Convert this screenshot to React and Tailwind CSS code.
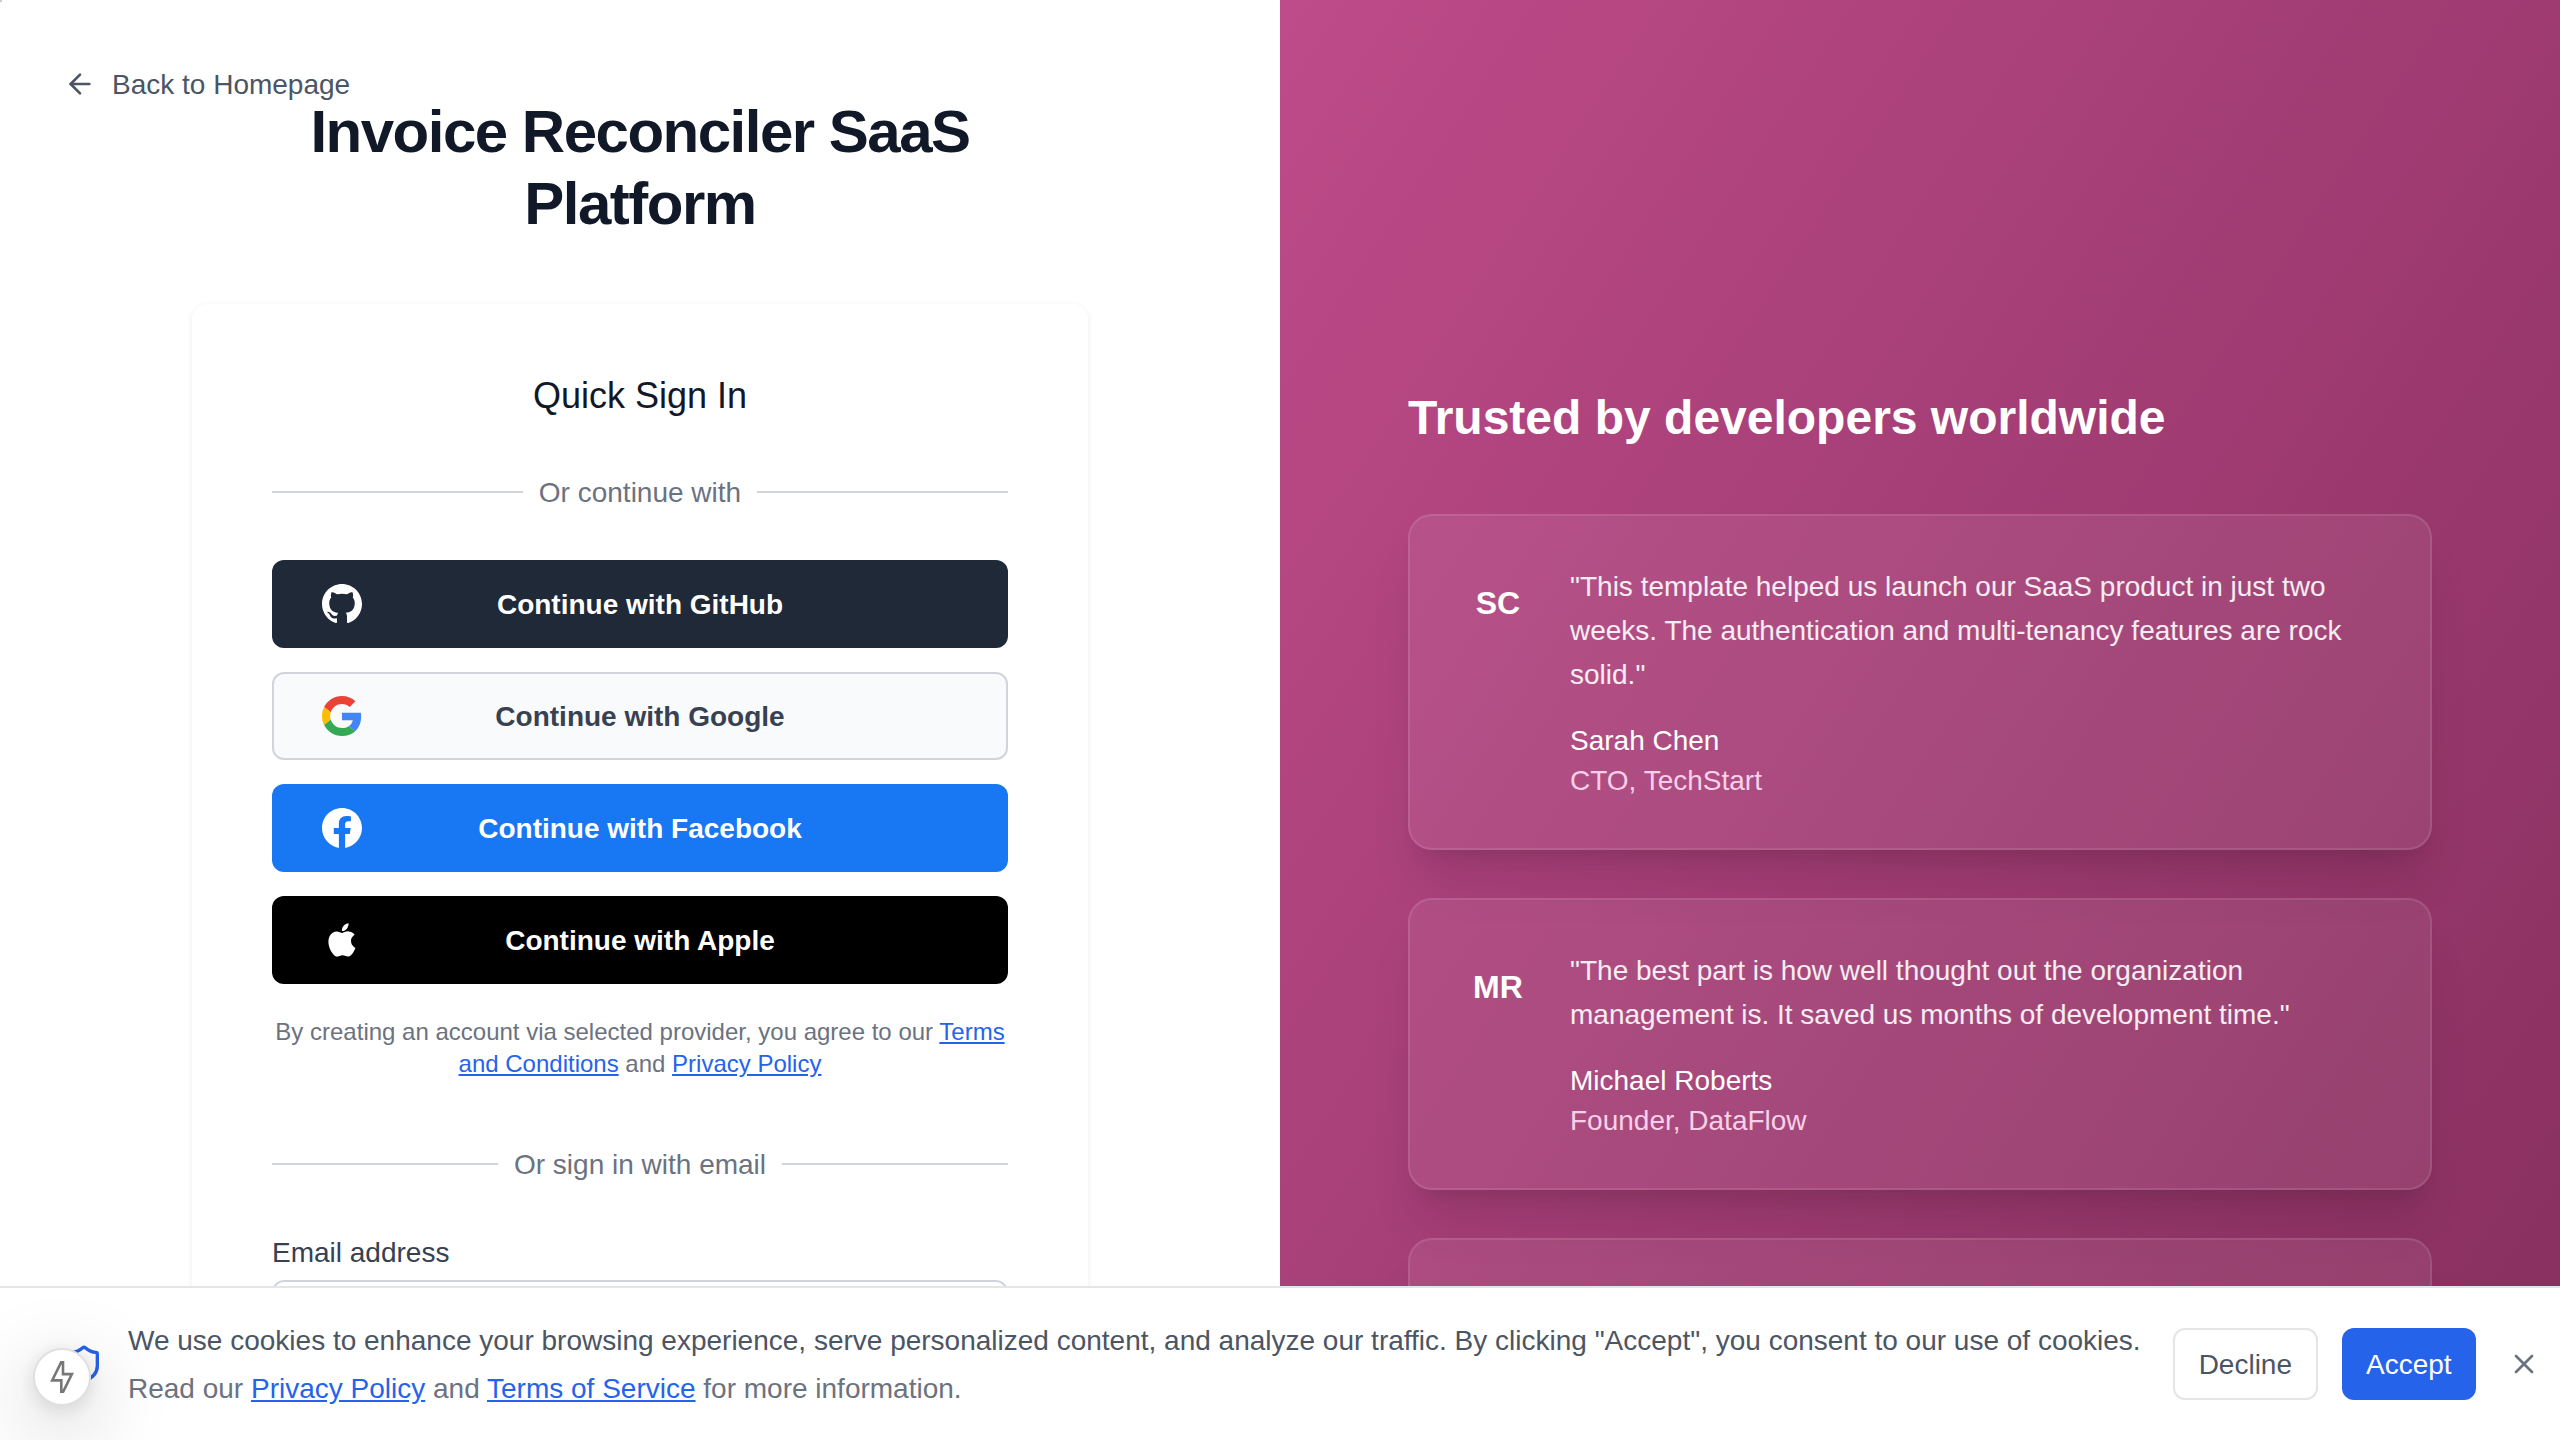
import { ArrowLeft, Shield, X } from "lucide-react";

const GitHubIcon = () => (
  <svg className="size-10" viewBox="0 0 24 24" fill="currentColor">
    <path d="M12 0c-6.626 0-12 5.373-12 12 0 5.302 3.438 9.8 8.207 11.387.599.111.793-.261.793-.577v-2.234c-3.338.726-4.033-1.416-4.033-1.416-.546-1.387-1.333-1.756-1.333-1.756-1.089-.745.083-.729.083-.729 1.205.084 1.839 1.237 1.839 1.237 1.07 1.834 2.807 1.304 3.492.997.107-.775.418-1.305.762-1.604-2.665-.305-5.467-1.334-5.467-5.931 0-1.311.469-2.381 1.236-3.221-.124-.303-.535-1.524.117-3.176 0 0 1.008-.322 3.301 1.23.957-.266 1.983-.399 3.003-.404 1.02.005 2.047.138 3.006.404 2.291-1.552 3.297-1.23 3.297-1.23.653 1.653.242 2.874.118 3.176.77.84 1.235 1.911 1.235 3.221 0 4.609-2.807 5.624-5.479 5.921.43.372.823 1.102.823 2.222v3.293c0 .319.192.694.801.576 4.765-1.589 8.199-6.086 8.199-11.386 0-6.627-5.373-12-12-12z" />
  </svg>
);

const GoogleIcon = () => (
  <svg className="size-10" viewBox="0 0 48 48">
    <path fill="#EA4335" d="M24 9.5c3.54 0 6.71 1.22 9.21 3.6l6.85-6.85C35.9 2.38 30.47 0 24 0 14.62 0 6.51 5.38 2.56 13.22l7.98 6.19C12.43 13.72 17.74 9.5 24 9.5z" />
    <path fill="#4285F4" d="M46.98 24.55c0-1.57-.15-3.09-.38-4.55H24v9.02h12.94c-.58 2.96-2.26 5.48-4.78 7.18l7.73 6c4.51-4.18 7.09-10.36 7.09-17.65z" />
    <path fill="#FBBC05" d="M10.53 28.59c-.48-1.45-.76-2.99-.76-4.59s.27-3.14.76-4.59l-7.98-6.19C.92 16.46 0 20.12 0 24c0 3.88.92 7.54 2.56 10.78l7.97-6.19z" />
    <path fill="#34A853" d="M24 48c6.48 0 11.93-2.13 15.89-5.81l-7.73-6c-2.15 1.45-4.92 2.3-8.16 2.3-6.26 0-11.57-4.22-13.47-9.91l-7.98 6.19C6.51 42.62 14.62 48 24 48z" />
  </svg>
);

const FacebookIcon = () => (
  <svg className="size-10" viewBox="0 0 24 24" fill="currentColor">
    <path d="M24 12.073c0-6.627-5.373-12-12-12s-12 5.373-12 12c0 5.99 4.388 10.954 10.125 11.854v-8.385H7.078v-3.47h3.047V9.43c0-3.007 1.792-4.669 4.533-4.669 1.312 0 2.686.235 2.686.235v2.953H15.83c-1.491 0-1.956.925-1.956 1.874v2.25h3.328l-.532 3.47h-2.796v8.385C19.612 23.027 24 18.062 24 12.073z" />
  </svg>
);

const AppleIcon = () => (
  <svg className="size-10" viewBox="0 0 24 24" fill="currentColor">
    <path d="M18.71 19.5c-.83 1.24-1.71 2.45-3.05 2.47-1.34.03-1.77-.79-3.29-.79-1.53 0-2 .77-3.27.82-1.31.05-2.3-1.32-3.14-2.53C4.25 17 2.94 12.45 4.7 9.39c.87-1.52 2.43-2.48 4.12-2.51 1.28-.02 2.5.87 3.29.87.78 0 2.26-1.07 3.81-.91.65.03 2.47.26 3.64 1.98-.09.06-2.17 1.28-2.15 3.81.03 3.02 2.65 4.03 2.68 4.04-.03.07-.42 1.44-1.38 2.83M13 3.5c.73-.83 1.94-1.46 2.94-1.5.13 1.17-.34 2.35-1.04 3.19-.69.85-1.83 1.51-2.95 1.42-.15-1.15.41-2.35 1.05-3.11z" />
  </svg>
);

const providers = [
  { name: "GitHub", Icon: GitHubIcon, style: "bg-[#1f2937] border-transparent text-white" },
  { name: "Google", Icon: GoogleIcon, style: "bg-[#f9fafb] border-[#d1d5db] text-[#374151]" },
  { name: "Facebook", Icon: FacebookIcon, style: "bg-[#1877f2] border-transparent text-white" },
  { name: "Apple", Icon: AppleIcon, style: "bg-black border-transparent text-white" },
];

const testimonials = [
  {
    initials: "SC",
    quote: "This template helped us launch our SaaS product in just two weeks. The authentication and multi-tenancy features are rock solid.",
    name: "Sarah Chen",
    role: "CTO, TechStart",
  },
  {
    initials: "MR",
    quote: "The best part is how well thought out the organization management is. It saved us months of development time.",
    name: "Michael Roberts",
    role: "Founder, DataFlow",
  },
  { initials: "", quote: "", name: "", role: "" },
];

const Link = ({ children }) => (
  <a href="#" className="text-[#2563eb] underline">
    {children}
  </a>
);

const Divider = ({ children }) => (
  <div className="flex h-10 items-center gap-4 text-[28px] leading-10 text-[#6b7280]">
    <span className="h-0.5 flex-1 bg-[#d1d5db]" />
    <span className="pt-0.5">{children}</span>
    <span className="h-0.5 flex-1 bg-[#d1d5db]" />
  </div>
);

function SignInPanel() {
  return (
    <section className="relative h-full w-1/2 overflow-hidden bg-white pt-24">
      <a
        href="#"
        className="absolute left-16 top-16 flex h-10 items-center gap-4 text-[28px] leading-10 text-[#4b5563]"
      >
        <ArrowLeft className="size-8" />
        <span className="pt-0.5">Back to Homepage</span>
      </a>
      <div className="mx-auto w-[896px]">
        <h1 className="text-center text-[60px] font-bold leading-[72px] tracking-tight text-[#111827]">
          Invoice Reconciler SaaS Platform
        </h1>
        <div className="mt-16 h-[1400px] rounded-2xl bg-white px-20 py-16 shadow-[0_2px_6px_0_rgba(0,0,0,0.08)]">
          <h2 className="text-center text-4xl leading-[56px] text-[#111827]">Quick Sign In</h2>
          <div className="mt-12">
            <Divider>Or continue with</Divider>
          </div>
          <div className="mt-12 flex flex-col gap-6">
            {providers.map(({ name, Icon, style }) => (
              <button
                key={name}
                className={`relative flex h-22 items-center justify-center rounded-xl border-2 pt-0.5 text-[28px] leading-10 font-bold ${style}`}
              >
                <span className="absolute inset-y-0 left-12 flex items-center">
                  <Icon />
                </span>
                Continue with {name}
              </button>
            ))}
          </div>
          <p className="mt-8 text-center text-2xl leading-8 text-[#6b7280]">
            By creating an account via selected provider, you agree to our <Link>Terms and Conditions</Link> and{" "}
            <Link>Privacy Policy</Link>
          </p>
          <div className="mt-16">
            <Divider>Or sign in with email</Divider>
          </div>
          <label className="mt-12 -mb-px block pt-px text-[28px] leading-10 text-[#374151]">Email address</label>
          <input className="mt-2 block h-20 w-full rounded-xl border-2 border-[#d1d5db] bg-white" />
        </div>
      </div>
    </section>
  );
}

function TestimonialsPanel() {
  return (
    <section className="h-[1960px] w-1/2 bg-linear-to-br from-[#be4b8a] to-[#7f2b58] px-32 pt-[386px]">
      <h2 className="text-5xl font-bold leading-16 text-white">Trusted by developers worldwide</h2>
      <div className="mt-16 flex flex-col gap-12">
        {testimonials.map(({ initials, quote, name, role }) => (
          <article
            key={name}
            className="flex min-h-[292px] gap-8 rounded-3xl border-2 border-white/10 bg-white/[0.07] p-12 shadow-[0_40px_50px_-10px_rgba(0,0,0,0.1),0_16px_20px_-12px_rgba(0,0,0,0.1)]"
          >
            <div className="flex size-20 shrink-0 items-center justify-center pb-0.5 text-[32px] font-bold text-white">
              {initials}
            </div>
            <div className="-mb-px pt-px text-[28px] leading-10">
              {quote && <p className="leading-11 text-white/90">"{quote}"</p>}
              <p className="mt-6 text-white">{name}</p>
              <p className="text-[#fbcfe8]">{role}</p>
            </div>
          </article>
        ))}
      </div>
    </section>
  );
}

function CookieBanner() {
  return (
    <footer className="fixed inset-x-0 bottom-0 flex items-center border-t-2 border-[#e5e5e5] bg-white py-8 pl-16 text-[28px] leading-10 whitespace-nowrap">
      <Shield className="mr-6 size-10 shrink-0 text-[#2563eb]" />
      <div className="mr-8 -mb-px pt-px">
        <p className="text-[#4b5563]">
          We use cookies to enhance your browsing experience, serve personalized content, and analyze our traffic. By
          clicking "Accept", you consent to our use of cookies.
        </p>
        <p className="mt-2 text-[#6b7280]">
          Read our <Link>Privacy Policy</Link> and <Link>Terms of Service</Link> for more information.
        </p>
      </div>
      <div className="flex items-center gap-6">
        <button className="h-18 rounded-xl border-2 border-[#e5e5e5] px-6 pt-0.5 text-[#4b5563]">Decline</button>
        <button className="h-18 rounded-xl bg-[#2563eb] px-6 pt-0.5 text-white">Accept</button>
        <button className="p-2 text-[#6b7280]">
          <X className="size-8" />
        </button>
      </div>
    </footer>
  );
}

function DevToolsButton() {
  return (
    <button className="fixed bottom-[34px] left-[33px] flex size-[58px] items-center justify-center rounded-full border-2 border-[#e0e0e0] bg-white text-[#777777] shadow-[0_22px_80px_0_rgba(0,0,0,0.25),0_4px_20px_0_rgba(0,0,0,0.12)]">
      <svg className="h-8 w-6" viewBox="0 0 24 32" fill="none" stroke="currentColor" strokeWidth="2.6">
        <path d="M13 -2.5V13.1H21.9L11.3 34.5V19.4H2.2Z" />
      </svg>
    </button>
  );
}

export default function App() {
  return (
    <main className="flex h-[1440px] w-[2560px] overflow-hidden bg-white font-['Liberation_Sans',Arial,sans-serif]">
      <SignInPanel />
      <TestimonialsPanel />
      <CookieBanner />
      <DevToolsButton />
      <span className="fixed left-0 top-0 size-0.5 bg-[#cccccc]" />
    </main>
  );
}
